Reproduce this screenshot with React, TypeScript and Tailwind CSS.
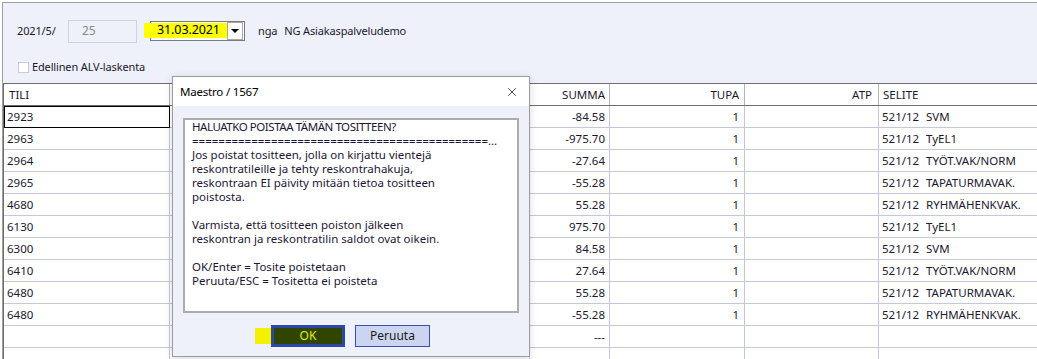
import { X } from "lucide-react";

const rows = [
  { tili: "2923", summa: "-84.58", tupa: "1", code: "521/12", text: "SVM" },
  { tili: "2963", summa: "-975.70", tupa: "1", code: "521/12", text: "TyEL1" },
  { tili: "2964", summa: "-27.64", tupa: "1", code: "521/12", text: "TYÖT.VAK/NORM" },
  { tili: "2965", summa: "-55.28", tupa: "1", code: "521/12", text: "TAPATURMAVAK." },
  { tili: "4680", summa: "55.28", tupa: "1", code: "521/12", text: "RYHMÄHENKVAK." },
  { tili: "6130", summa: "975.70", tupa: "1", code: "521/12", text: "TyEL1" },
  { tili: "6300", summa: "84.58", tupa: "1", code: "521/12", text: "SVM" },
  { tili: "6410", summa: "27.64", tupa: "1", code: "521/12", text: "TYÖT.VAK/NORM" },
  { tili: "6480", summa: "55.28", tupa: "1", code: "521/12", text: "TAPATURMAVAK." },
  { tili: "6480", summa: "-55.28", tupa: "1", code: "521/12", text: "RYHMÄHENKVAK." },
  { tili: "", summa: "---", tupa: "", code: "", text: "" },
  { tili: "", summa: "", tupa: "", code: "", text: "" },
];

const cols = "grid grid-cols-[166px_360px_80px_135px_134px_1fr]";
const cell = "h-[22px] flex items-center border-r border-b border-[#c3c8dd] whitespace-nowrap overflow-hidden";

const messageLines = [
  "Jos poistat tositteen, jolla on kirjattu vientejä",
  "reskontratileille ja tehty reskontrahakuja,",
  "reskontraan EI päivity mitään tietoa tositteen",
  "poistosta.",
  "",
  "Varmista, että tositteen poiston jälkeen",
  "reskontran ja reskontratilin saldot ovat oikein.",
  "",
  "OK/Enter = Tosite poistetaan",
  "Peruuta/ESC = Tositetta ei poisteta",
];

export default function App() {
  return (
    <div
      className="relative w-[1037px] h-[359px] overflow-hidden bg-white pt-[2px] pl-[2px] text-[#1c1830]"
      style={{ fontFamily: '"Segoe UI", "Noto Sans", sans-serif' }}
    >
      <div className="border-l border-[#a0a0a0] h-full">
        {/* Header panel */}
        <div className="h-[81px] border-t border-[#a0a0a0] bg-[#eef1f9] pl-[14px] text-[11px] tracking-[-0.15px]">
          <div className="mt-[16px] h-[24px] flex items-center">
            <span className="w-[51px]">2021/5/</span>
            <div className="w-[69px] h-[23px] border border-[#cfd2dc] flex items-center pl-[13px] text-[12px] text-[#8b8b8b]">25</div>
            <div className="relative ml-[13px] w-[95px] h-[20px] border border-[#7a7a7a] bg-white">
              <div className="absolute -left-[7px] top-[1px] w-[83px] h-[15px] bg-[#ffff00]" />
              <span className="absolute left-[6px] top-0 h-[17px] flex items-center text-[12.5px] tracking-[-0.1px] text-black">31.03.2021</span>
              <div className="absolute right-[1px] top-0 w-[16px] h-[18px] bg-white border border-[#a8a8a8] flex items-center justify-center">
                <div className="w-0 h-0 border-l-[4px] border-r-[4px] border-t-[4px] border-l-transparent border-r-transparent border-t-black" />
              </div>
            </div>
            <span className="ml-[13px]">nga</span>
            <span className="ml-[7px]">NG Asiakaspalveludemo</span>
          </div>
          <div className="mt-[15px] h-[18px] flex items-center">
            <div className="ml-[1px] w-[11px] h-[11px] border border-[#cbcbcb] bg-white" />
            <span className="ml-[3px]">Edellinen ALV-laskenta</span>
          </div>
        </div>

        {/* Grid */}
        <div className="border-t border-l border-[#6d6d6d] text-[11.5px]">
          <div className={`${cols} border-b border-[#6d6d6d]`}>
            <div className="h-[21px] flex items-center pl-[5px] border-r border-[#b4b4b4]">TILI</div>
            <div className="h-[21px] border-r border-[#b4b4b4]" />
            <div className="h-[21px] flex items-center justify-end pr-[4px] border-r border-[#b4b4b4]">SUMMA</div>
            <div className="h-[21px] flex items-center justify-end pr-[5px] border-r border-[#b4b4b4]">TUPA</div>
            <div className="h-[21px] flex items-center justify-end pr-[6px] border-r border-[#b4b4b4]">ATP</div>
            <div className="h-[21px] flex items-center pl-[4px]">SELITE</div>
          </div>
          {rows.map((r, i) => (
            <div key={i} className={cols}>
              <div className={`${cell} pl-[3px] ${i === 0 ? "outline outline-1 -outline-offset-1 outline-black" : ""}`}>{r.tili}</div>
              <div className={cell} />
              <div className={`${cell} justify-end pr-[4px]`}>{r.summa}</div>
              <div className={`${cell} justify-end pr-[5px]`}>{r.tupa}</div>
              <div className={cell} />
              <div className={`${cell} pl-[3px] border-r-0`}>
                <span className="w-[44px]">{r.code}</span>
                <span>{r.text}</span>
              </div>
            </div>
          ))}
        </div>
      </div>

      {/* Modal dialog */}
      <div className="absolute left-[172px] top-[76px] w-[358px] h-[281px] border border-[#9c9c9c] bg-[#eef1f9] shadow-[0_2px_8px_rgba(0,0,0,0.15)]">
        <div className="h-[29px] bg-white flex items-center justify-between pl-[7px] pr-[10px] text-[11.5px] tracking-[-0.2px] text-black">
          <span>Maestro / 1567</span>
          <X size={14} strokeWidth={1.2} className="text-black" />
        </div>
        <div className="ml-[10px] mt-[12px] w-[336px] h-[195px] border-2 border-[#acacac] bg-white pl-[7px] pr-[12px] text-[11.5px] leading-[14px] text-[#1d1535]">
          <div className="h-[14px] whitespace-nowrap tracking-[-0.45px]">HALUATKO POISTAA TÄMÄN TOSITTEEN?</div>
          <div className="h-[14px] whitespace-nowrap">=============================================…</div>
          {messageLines.map((l, i) => (
            <div key={i} className="h-[14px] whitespace-nowrap">{l}</div>
          ))}
        </div>
        <div className="mt-[12px] flex items-center text-[12px]">
          <div className="ml-[82px] w-[16px] h-[16px] bg-[#f2f200]" />
          <div className="w-[74px] h-[22px] border-[3px] border-[#2c47aa] bg-[#2f4500] flex items-center justify-center text-[#e6ec00]">OK</div>
          <div className="ml-[10px] w-[75px] h-[22px] border border-[#3550ad] bg-[#ccd5ef] flex items-center justify-center text-[#1b1b1b]">Peruuta</div>
        </div>
      </div>
    </div>
  );
}
